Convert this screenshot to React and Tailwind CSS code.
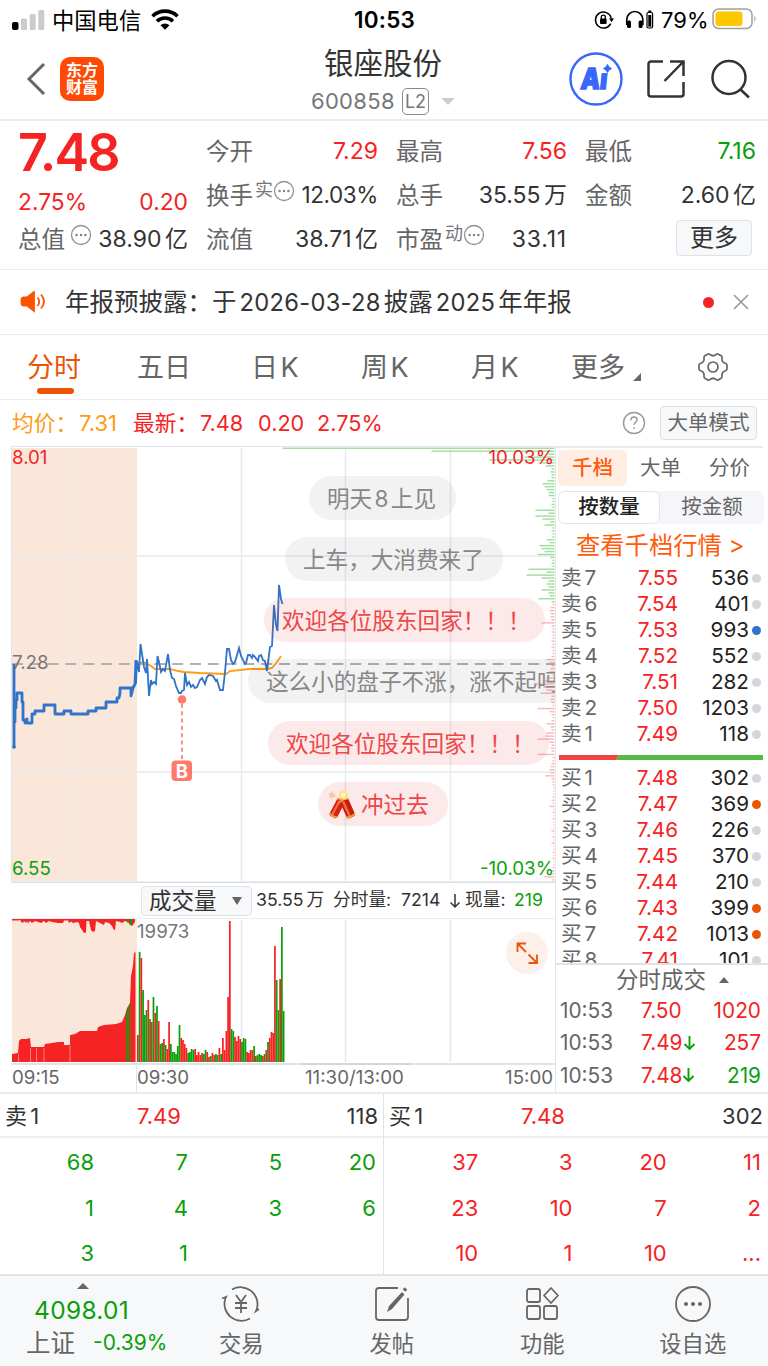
import clsx from "clsx";

const RED = "text-[#f52323]";
const GREEN = "text-[#0aa00a]";

const TABS = ["五日", "日 K", "周 K", "月 K"];

const ASKS = [
  { label: "卖 7", price: "7.55", volume: 536 },
  { label: "卖 6", price: "7.54", volume: 401 },
  { label: "卖 5", price: "7.53", volume: 993, dot: "bg-[#2f74c9]" },
  { label: "卖 4", price: "7.52", volume: 552 },
  { label: "卖 3", price: "7.51", volume: 282 },
  { label: "卖 2", price: "7.50", volume: 1203 },
  { label: "卖 1", price: "7.49", volume: 118 },
];

const BIDS = [
  { label: "买 1", price: "7.48", volume: 302 },
  { label: "买 2", price: "7.47", volume: 369, dot: "bg-[#ea5504]" },
  { label: "买 3", price: "7.46", volume: 226 },
  { label: "买 4", price: "7.45", volume: 370 },
  { label: "买 5", price: "7.44", volume: 210 },
  { label: "买 6", price: "7.43", volume: 399, dot: "bg-[#ea5504]" },
  { label: "买 7", price: "7.42", volume: 1013, dot: "bg-[#ea5504]" },
  { label: "买 8", price: "7.41", volume: 101 },
];

const TICKS = [
  { price: "7.50", volume: 1020 },
  { price: "7.49", down: true, volume: 257 },
  { price: "7.48", down: true, volume: 219, sell: true },
];

const SELL_QUEUE = ["68", "7", "5", "20", "1", "4", "3", "6", "3", "1", "", ""];
const BUY_QUEUE = ["37", "3", "20", "11", "23", "10", "7", "2", "10", "1", "10", "..."];

const AUCTION_LINE =
  "14,664 14,747 14,722 15,722 15,708 16,708 16,700 17,700 17,693 22,693 22,702 23,702 23,720 25,720 25,723 27,719 27,723 32,723 32,714 35,714 35,711 44,711 44,705 55,705 55,714 64,714 64,711 71,711 71,714 88,714 88,711 96,711 96,708 106,708 106,702 117,702 117,698 119,698 120,693 120,688 131,688 131,696 133,688 135,684 136,660";

const PRICE_LINE =
  "136,684 137,661 139,672 140.5,644 144,667 146,673 147,659 149,696 151,680 152,684 154,682 156,684 157.5,656 159,662 161,672 163,669 165,671 168,654 170,670 172,678 174,679 176,686 179,693 181,693 182,691 184,690 185,673 187,685 189,682 191,687 193,685 195,688 197,687 200,680 202,678 205,684 207,677 209,675 213,676 216,681 217,680 220,690 223,690 225,672 227,649 229,649 231,660 233,664 235,662 239,648 241,656 245,664 246,663 248,655 250,655 252,658 253,655 255,657 258,661 259,656 261,655 263,660 265,661 267,671 268,663 270,647 272,646 274,605 276,625 277.5,631 279,585 281,599 282.5,604";

const AVG_LINE =
  "138,664 140,663 143,662 146,663 151,666 155,669 170,669 178,671 184,672 200,673 226,674 230,671 250,669 267,669 272,668 277,662 281,656";

const AUCTION_VOLUME =
  "12,1062 12,1054 18,1053 19,1041 21,1039 26,1039 30,1038 31,1047 44,1047 45,1044 52,1043 58,1042 64,1042 64,1045 70,1045 70,1035 75,1034 80,1031 97,1031 98,1027 104,1025 116,1024 122,1022 125,1015 127,1008 130,1003 131,976 133,966 134,953 135.5,952 135.5,1062";

const AUCTION_UNMATCHED =
  "12,919 12,920.5 19,920.5 20,919.5 21,922 23,923 24,921 26,923 27,921 28,923.5 30,921 32,923 35,921 38,922 41,923 44,921 46,923 49,921 52,922 58,923 63,923 64,920.5 68,920.5 69,923 71,921.5 73,923 77,922 79,923 80,927 82,930 84,933 86,932.5 86.5,921 89,921 91,930 93,932 95,931 96,921 100,923 104,925 105,922 109,923 112,926 114,930 115,930 116,921 120,922 122,923 125,921 128,922 130,925 132,926 135,922 135,919";

// order depth per price level, green above the last price and red below
const DEPTH_UP = [
  272, 123, 6, 30, 65, 12, 9, 3, 4, 3, 3, 7, 12, 10, 8, 6, 6, 2, 2, 3, 2, 19, 6, 19,
  12, 4, 10, 2, 3, 2, 2, 8, 5, 15, 13, 10, 17, 4, 2, 3, 2, 26, 8, 28, 13, 6, 8, 6, 13,
  6, 5, 16, 3,
];
const DEPTH_DOWN = [
  2, 4, 5, 4, 4, 3, 13, 3, 2, 3, 2, 2, 3, 2, 3, 2, 2, 3, 8, 5, 3, 4, 5, 2, 8, 12, 21,
  11, 8, 14, 3, 4, 3, 2, 17, 5, 3, 2, 3, 8, 4, 3, 8, 9, 17, 5, 3, 4, 3, 17, 2, 2, 3, 4,
  5, 4, 9, 3, 2, 2, 1, 1, 1, 2, 3, 2, 5, 1, 2, 1, 2, 1, 1, 1, 3, 1, 2, 1, 3, 1, 1, 2,
  1, 2, 1, 1, 2, 3, 2, 10, 2,
];

const VOLUME =
  "r27 g110 r104 g72 g47 g52 r62 g43 r40 g65 r49 g56 r41 g18 g19 r23 g17 r13 r40 g18 g10 g10 g8 g16 g37 r24 r22 r18 r14 g9 g10 g13 g12 r13 r7 r10 r7 r9 g8 g12 r10 r5 g6 r9 r7 g8 g7 r14 g8 r24 r12 r31 r65 r141 g33 g31 r25 r21 r26 r23 g20 g24 g23 r10 r9 r12 r12 g16 r6 g7 g8 g7 r6 g8 r12 g20 r24 r30 r29 r116 g82 g52 r83 g135 g51".split(
    " ",
  );

const BUBBLES = [
  { text: "明天 8 上见", box: "left-[309px] top-[30px] w-[147px]" },
  { text: "上车，大消费来了", box: "left-[285px] top-[91px] w-[218px]" },
  { text: "欢迎各位股东回家！！！", box: "left-[264px] top-[152px] w-[281px]", hot: true },
  { text: "这么小的盘子不涨，涨不起吗", box: "left-[248px] top-[213px] w-[335px]" },
  { text: "欢迎各位股东回家！！！", box: "left-[268px] top-[275px] w-[281px]", hot: true },
  { text: "冲过去", box: "left-[318px] top-[336px] w-[130px]", hot: true, cracker: true },
];

function MoreDots({ className }) {
  return (
    <svg viewBox="0 0 22 22" className={clsx("size-[22px] shrink-0", className)}>
      <circle cx="11" cy="11" r="9.5" fill="none" stroke="#929292" strokeWidth="1.3" />
      <g fill="#808080">
        <circle cx="6.6" cy="11" r="1.2" />
        <circle cx="11" cy="11" r="1.2" />
        <circle cx="15.4" cy="11" r="1.2" />
      </g>
    </svg>
  );
}

function StatusBar() {
  return (
    <div className="flex h-10 items-center text-[22px] leading-10 text-black">
      <svg viewBox="0 0 34 22" className="ml-3 h-[22px] w-[34px]">
        <rect x="0" y="13" width="6.5" height="8" rx="2" />
        <g fill="#cbcbcb">
          <rect x="9" y="9.5" width="6" height="11.5" rx="1.5" />
          <rect x="17.7" y="5" width="6" height="16" rx="1.5" />
          <rect x="26.3" y="1" width="6" height="20" rx="1.5" />
        </g>
      </svg>
      <span className="ml-[6px] w-[90px] pt-px text-[22.3px]">中国电信</span>
      <svg viewBox="0 0 28 21" className="-mt-px ml-[9px] h-[21px] w-7" fill="none" stroke="#000" strokeWidth="3.6">
        <path d="M1.5 7.2a18 18 0 0 1 25 0" />
        <path d="M6 12.3a11.500 11.500 0 0 1 16 0" />
        <path d="M9.500 16.200a6.500 6.500 0 0 1 9 0L14 20.800z" fill="#000" stroke="none" />
      </svg>
      <span className="ml-[175px] w-[66px] text-[22.5px] font-semibold tracking-[0.2px]">10:53</span>
      <svg viewBox="0 0 20 20" className="ml-[174px] size-5">
        <path d="M17.500 9.500a8 8 0 1 1-2.400-5.200" fill="none" stroke="#000" strokeWidth="1.5" transform="rotate(30 9.500 10)" />
        <path d="M15 8.300h5l-2.500 4z" />
        <rect x="6" y="8.5" width="6.6" height="5.5" rx="1" />
        <path d="M7.300 9V7.200a2 2 0 0 1 4 0V9" fill="none" stroke="#000" strokeWidth="1.3" />
      </svg>
      <svg viewBox="0 0 30 20" className="ml-[11px] h-5 w-[30px]">
        <path d="M1.800 15V9.500a8 8 0 0 1 16 0V15" fill="none" stroke="#000" strokeWidth="1.7" />
        <rect x="2" y="10.5" width="4" height="7.5" rx="1.5" />
        <rect x="13.6" y="10.5" width="4" height="7.5" rx="1.5" />
        <rect x="22" y="2.5" width="5.6" height="15.5" rx="1.2" fill="none" stroke="#000" strokeWidth="1.2" />
        <rect x="23.3" y="5" width="3" height="11.7" />
        <rect x="23.3" y="0.5" width="3" height="1.5" />
      </svg>
      <span className="ml-[6px] w-[48px] text-[22px]">79%</span>
      <svg viewBox="0 0 46 22" className="-mt-[2px] ml-[3px] h-[22px] w-[46px]">
        <rect x="1" y="1" width="39" height="19.5" rx="5.5" fill="none" stroke="#a0a0a0" strokeWidth="1.5" />
        <rect x="3.5" y="3.5" width="27" height="14.5" rx="3" fill="#fdc800" />
        <path d="M42.300 7.500q2.500 3.200 0 6.600z" fill="#a0a0a0" />
      </svg>
    </div>
  );
}

function Header() {
  return (
    <header className="relative flex h-[81px] items-center border-b-2 border-[#ececee] pb-[2px]">
      <svg viewBox="0 0 20 34" className="ml-[26px] h-[34px] w-5" fill="none" stroke="#666" strokeWidth="3">
        <path d="M18 2 3 17l15 15" />
      </svg>
      <div className="ml-[14px] flex size-11 flex-col items-center justify-center rounded-[10px] bg-[#ff4a05] pt-px text-[16px] leading-[17.5px] font-bold text-white">
        <span>东方</span>
        <span>财富</span>
      </div>
      <div className="absolute top-0 left-[311px] w-[150px]">
        <h1 className="mt-[5px] pl-[13px] text-[29.5px] leading-9 text-[#333]">银座股份</h1>
        <div className="flex h-[40px] items-center text-[22px] text-[#777]">
          <span className="w-[91px] tracking-[0.3px]">600858</span>
          <span className="flex h-[27px] w-[27px] items-center justify-center rounded-[5px] border-[1.5px] border-[#888] text-[18px]">
            L2
          </span>
          <svg viewBox="0 0 14 7" className="ml-3 h-[7px] w-[14px]" fill="#ccc">
            <path d="M0 0h14L7 7z" />
          </svg>
        </div>
      </div>
      <svg viewBox="0 0 54 54" className="ml-auto size-[54px]">
        <circle cx="27" cy="27" r="25.5" fill="none" stroke="#3966fb" strokeWidth="2.4" />
        <g transform="translate(11 37) skewX(-6) scale(.84 1)">
          <text x="0" y="0" fill="#3966fb" stroke="#3966fb" strokeWidth="1.400" className="text-[29px] font-black">
            Ai
          </text>
        </g>
        <path d="M31 9.500h13v11.500H31z" fill="#fff" />
        <path d="M38.500 12.500q1 3 4 4-3 1-4 4-1-3-4-4 3-1 4-4z" fill="#3966fb" stroke="#3966fb" />
      </svg>
      <svg viewBox="0 0 40 40" className="ml-[23px] size-10" fill="none" stroke="#333" strokeWidth="2.5">
        <path d="M17 2.500H5A2.500 2.500 0 0 0 2.500 5v30A2.500 2.500 0 0 0 5 37.500h30a2.500 2.500 0 0 0 2.500-2.500V23M24 2.500h13.500V17M37 3 18.500 22" />
      </svg>
      <svg viewBox="0 0 40 40" className="mr-[18px] ml-[24px] size-10" fill="none" stroke="#333" strokeWidth="2.5">
        <circle cx="19" cy="18.5" r="16.5" />
        <path d="m30.500 30.500 8.500 8" />
      </svg>
    </header>
  );
}

function Stat({ label, sup, more, value, color = "text-[#333]" }) {
  return (
    <div className="flex h-11 items-center whitespace-nowrap">
      <span className="pt-px text-[23.5px] text-[#666]">{label}</span>
      {sup && <span className="-mt-3 ml-[2px] text-[18px] text-[#777]">{sup}</span>}
      {more && <MoreDots className={clsx("-mt-2", !sup && "ml-[5px]")} />}
      <span className={clsx("ml-auto text-[23px] [word-spacing:-3px]", color)}>{value}</span>
    </div>
  );
}

function Quote() {
  return (
    <section className="grid h-[149px] grid-cols-[170px_172px_171px_171px] gap-x-[18px] border-b border-[#eee] pt-[7px] pl-[18px]">
      <div className={RED}>
        <div className="-mt-px h-[52px] text-[52px] leading-[52px] font-semibold tracking-[-1.8px]">7.48</div>
        <div className="mt-[7px] flex h-8 items-center justify-between text-[22.8px]">
          <span>2.75%</span>
          <span>0.20</span>
        </div>
        <div className="-mt-px">
          <Stat label="总值" more value="38.90 亿" />
        </div>
      </div>
      <div className="pt-px">
        <Stat label="今开" value="7.29" color={RED} />
        <Stat label="换手" sup="实" more value={<span className="text-[22.5px] tracking-[-0.4px]">12.03%</span>} />
        <Stat label="流值" value="38.71 亿" />
      </div>
      <div className="pt-px">
        <Stat label="最高" value="7.56" color={RED} />
        <Stat label="总手" value="35.55 万" />
        <Stat label="市盈" sup="动" more value={<span className="tracking-[0.8px]">33.11</span>} />
      </div>
      <div className="pt-px">
        <Stat label="最低" value="7.16" color={GREEN} />
        <Stat label="金额" value="2.60 亿" />
        <button className="mt-[3px] ml-[91px] flex h-9 w-[76px] items-center justify-center rounded-[4px] border border-[#dfe2e8] bg-[#f7f8fa] text-[24px] text-[#333]">
          更多
        </button>
      </div>
    </section>
  );
}

function Notice() {
  return (
    <section className="flex h-[65px] items-center border-b border-[#eee] pl-5">
      <svg viewBox="0 0 26 22" className="h-[22px] w-[26px]" fill="none" stroke="#ff5200" strokeWidth="1.8">
        <path d="M3.500 6.500H7l7-5.500v19l-7-5.500H3.500a2 2 0 0 1-2-2v-4a2 2 0 0 1 2-2z" fill="#ff5200" />
        <path d="M17.500 6.500q3.500 4 0 8.500M21 3.500q6 7 0 14" />
      </svg>
      <p className="ml-[19px] text-[24.5px] whitespace-nowrap text-[#333]">
        年报预披露：于
        <span className="mx-[3px] text-[23.7px] tracking-[0.3px]">2026-03-28</span>
        披露
        <span className="mx-[3px] text-[23.7px] tracking-[0.3px]">2025</span>
        年年报
      </p>
      <span className="ml-auto size-[11px] rounded-full bg-[#f52323]" />
      <svg viewBox="0 0 16 16" className="mr-[19px] ml-[19px] size-4" stroke="#999" strokeWidth="1.6">
        <path d="m1 1 14 14M15 1 1 15" />
      </svg>
    </section>
  );
}

function PeriodTabs() {
  return (
    <nav className="flex h-[65px] items-center border-b border-[#eee] text-[27px] text-[#666] [word-spacing:-5px]">
      <div className="relative ml-[27px] h-[64px] w-[110px] leading-[66px] text-[#ea5504]">
        分时
        <span className="absolute bottom-[5px] left-[10px] h-[6px] w-[37px] rounded-full bg-[#ea5504]" />
      </div>
      {TABS.map((tab, i) => (
        <span key={tab} className={clsx("pt-[2px]", i === 0 ? "w-[114px]" : i === 3 ? "w-[100px]" : "w-[110px]")}>
          {tab}
        </span>
      ))}
      <span className="pt-[2px]">更多</span>
      <svg viewBox="0 0 8 8" className="mt-[19px] ml-[8px] size-2" fill="#666">
        <path d="M8 0v8H0z" />
      </svg>
      <svg viewBox="0 0 32 32" className="ml-[56px] size-8" fill="none" stroke="#666" strokeWidth="1.7">
        <path d="M10.500 3.200q1.200-.8 2.300.2 3.200 2.700 6.400 0 1.100-1 2.300-.2l2.600 1.500q1.200.8.900 2.100-.6 4.300 3.300 5.500 1.700.5 1.700 2v3.400q0 1.500-1.700 2-3.900 1.200-3.300 5.500.3 1.300-.9 2.100l-2.600 1.500q-1.200.8-2.300-.2-3.200-2.700-6.400 0-1.100 1-2.300.2l-2.600-1.500q-1.200-.8-.9-2.100.6-4.300-3.300-5.500-1.700-.5-1.700-2v-3.400q0-1.500 1.700-2Q7.600 11.100 7 6.800q-.3-1.300.9-2.100z" />
        <circle cx="16" cy="16" r="5" />
      </svg>
    </nav>
  );
}

function AvgRow() {
  return (
    <div className={clsx("flex h-[46px] items-center pl-3 text-[21.7px] whitespace-nowrap", RED)}>
      <span className="w-[67px] text-[#ff9b14]">均价：</span>
      <span className="w-[54px] text-[22px] text-[#ff9b14]">7.31</span>
      <span className="w-[67px]">最新：</span>
      <span className="w-[58px]">7.48</span>
      <span className="w-[59px]">0.20</span>
      <span>2.75%</span>
      <svg viewBox="0 0 24 24" className="ml-auto size-6" fill="none" stroke="#999" strokeWidth="1.4">
        <circle cx="12" cy="12" r="10.5" />
        <path d="M8.800 9.500q.2-3.500 3.300-3.500 3 0 3 2.700 0 1.500-1.600 2.600-1.400 1-1.400 2.800M12.100 16.200v1.700" />
      </svg>
      <button className="mr-[11px] ml-[14px] flex h-[34px] w-[97px] items-center justify-center rounded-[4px] border border-[#dce0e6] bg-[#f7f8fa] pt-px text-[20.5px] text-[#666]">
        大单模式
      </button>
    </div>
  );
}

function Firecracker() {
  return (
    <svg viewBox="0 0 30 30" className="mr-[4px] -ml-[9px] size-[30px] shrink-0">
      <path d="m5 1 1 3 3-1-2 2 3 2-4 0-1 3-1-3-3 1 2-2-2-2 3-1z" fill="#f5c9a0" />
      <g transform="rotate(28 10 18)">
        <rect x="6" y="8" width="8.5" height="20" rx="2" fill="#d42312" />
        <path d="M8 10h2v16H8z" fill="#ff7043" />
        <path d="M6 9.500q4.200-2 8.500 0M6 26q4.200 2 8.500 0" fill="none" stroke="#f2a43a" strokeWidth="1.8" />
      </g>
      <g transform="rotate(-24 21 18)">
        <rect x="16" y="8" width="9" height="20" rx="2" fill="#c91d10" />
        <path d="M18 10h2.500v16H18z" fill="#fa6a3c" />
        <path d="M16 9.500q4.500-2 9 0M16 26q4.500 2 9 0" fill="none" stroke="#f2a43a" strokeWidth="1.8" />
      </g>
      <circle cx="16.5" cy="5" r="4.6" fill="#ffe082" />
      <circle cx="16.5" cy="5" r="2.3" fill="#fff6cf" />
    </svg>
  );
}

function Bubble({ text, box, hot, cracker }) {
  return (
    <div
      className={clsx(
        "absolute flex h-11 items-center rounded-full pt-px pl-[18px] text-[22.6px] whitespace-pre [word-spacing:-4px]",
        box,
        hot ? "bg-[#e02a2a]/10 text-[#ee4747]" : "bg-black/5 text-[#878787]",
      )}
    >
      {cracker && <Firecracker />}
      {text}
    </div>
  );
}

function PriceChart() {
  return (
    <div className="relative h-[437px] overflow-hidden text-[18.7px] leading-5">
      <svg viewBox="0 446 555 437" className="block h-[437px] w-[555px]" fill="none">
        <path d="M12 448h125v433H12z" fill="#fbe7da" />
        <path d="M74.500 448v433M241.500 448v433M345.500 448v433M450.500 448v433M12 556h543M12 772h543" stroke="#e9eaf1" strokeWidth="1.5" />
        <path d="M11.500 881V446" stroke="#dfe2e8" />
        <path d="M11 446h545" stroke="#e4e6ea" strokeWidth="2" />
        <path d="M11 882.300h545" stroke="#dadfe5" strokeWidth="1.5" />
        <path d="M12 664H555" stroke="#b5b0b0" strokeWidth="1.8" strokeDasharray="11 6.8" />
        {DEPTH_UP.map((len, i) => (
          <path key={i} d={`M${554.5 - len} ${448.3 + i * 2.95}H554.5`} stroke="#a3dfa3" strokeWidth="1.5" />
        ))}
        {DEPTH_DOWN.map((len, i) => (
          <path key={i} d={`M${554.5 - len} ${604.5 + i * 3.06}H554.5`} stroke="#f8bcbc" strokeWidth="1.5" />
        ))}
        <polyline points={AVG_LINE} stroke="#ff9b14" strokeWidth="1.8" />
        <polyline points={AUCTION_LINE} stroke="#2f74c9" strokeWidth="2.8" strokeLinejoin="round" />
        <circle cx="14" cy="747" r="1.8" fill="#2f74c9" />
        <polyline points={PRICE_LINE} stroke="#2f74c9" strokeWidth="1.8" />
        <path d="M182 704v56" stroke="#ff7a6b" strokeWidth="1.7" strokeDasharray="4 3.3" />
        <circle cx="182" cy="699.5" r="4.3" fill="#ff7a6b" />
        <rect x="171.5" y="760.5" width="20.5" height="20.5" rx="4" fill="#ff7a6b" />
        <text x="181.8" y="777.5" textAnchor="middle" fill="#fff" className="text-[18.5px] font-bold">
          B
        </text>
      </svg>
      {BUBBLES.map((bubble) => (
        <Bubble key={bubble.box} {...bubble} />
      ))}
      <span className={clsx("absolute top-[2px] left-3", RED)}>8.01</span>
      <span className="absolute top-[207px] left-3 text-[#777]">7.28</span>
      <span className={clsx("absolute top-[413px] left-3", GREEN)}>6.55</span>
      <span className={clsx("absolute top-[2px] right-[1px]", RED)}>10.03%</span>
      <span className={clsx("absolute top-[413px] right-[1px]", GREEN)}>-10.03%</span>
    </div>
  );
}

function VolumeChart() {
  return (
    <div>
      <div className="flex h-[35px] items-center pl-[141px] text-[17.7px] whitespace-nowrap text-[#333] [word-spacing:-2px]">
        <button className="flex h-[30px] w-[111px] items-center rounded-[4px] border border-[#dfe2e8] bg-[#f7f8fa] pt-px pl-[7px] text-[22.5px]">
          成交量
          <svg viewBox="0 0 10 8" className="ml-[15px] h-2 w-[10px]" fill="#666">
            <path d="M0 0h10L5 8z" />
          </svg>
        </button>
        <span className="ml-1 w-[77px]">35.55 万</span>
        <span className="w-[68px]">分时量:</span>
        <span className="w-[45px]">7214</span>
        <svg viewBox="0 0 12 16" className="mr-1 ml-[3px] h-4 w-3" fill="none" stroke="#333" strokeWidth="1.5">
          <path d="M6 1v13M1.500 9.500 6 14l4.500-4.500" />
        </svg>
        <span className="w-[49px]">现量:</span>
        <span className={GREEN}>219</span>
      </div>
      <div className="relative h-[147px]">
        <svg viewBox="0 918 555 147" className="block h-[147px] w-[555px]" fill="none">
          <path d="M12 919h125v143H12z" fill="#fbe7da" />
          <path d="M74.500 919v143M241.500 920v142M345.500 920v142M450.500 920v142" stroke="#e4e7ee" strokeWidth="1.5" />
          <path d="M11 918.500h545" stroke="#eceef2" />
          <polygon points={AUCTION_UNMATCHED} fill="#f52323" />
          <path d="M127 919h1.500v3.500h-1.500zM130 919h2v6h-2z" fill="#0aa00a" />
          <polygon points={AUCTION_VOLUME} fill="#f52323" />
          <path d="M18.500 1062v-8M30.500 1062v-14M36.500 1062v-14M44 1062v-14M70 1062v-16" stroke="#fbb" strokeWidth=".6" />
          <path d="M126.300 1062v-50l1.500-4V1062zM129 1062v-58l1.500-1V1062z" fill="#0aa00a" />
          {VOLUME.map((bar, i) => (
            <rect
              key={i}
              x={137 + i * 1.735}
              y={1062 - Number(bar.slice(1))}
              width="1.74"
              height={bar.slice(1)}
              fill={bar[0] === "r" ? "#f52323" : "#0aa00a"}
            />
          ))}
          <path d="M11 1064h545" stroke="#dfe4e9" strokeWidth="2" />
          <path d="M301 1064h111" stroke="#cfd3d8" strokeWidth="1.5" />
          <circle cx="527" cy="953" r="21" fill="#fdf0ea" />
          <path d="M517.500 952v-8.500h8.500M518 944l8 8M537 954.500v8.500h-8.500M536.500 962.500l-8-8" stroke="#ea5504" strokeWidth="1.8" />
        </svg>
        <span className="absolute top-1 left-[137px] text-[18.7px] leading-5 text-[#777]">19973</span>
      </div>
      <div className="flex h-[27px] items-center pl-3 text-[18.7px] text-[#666]">
        <span className="flex h-full w-[125px] items-center border-r border-[#dfe2e8]">09:15</span>
        <span className="w-[168px]">09:30</span>
        <span>11:30/13:00</span>
        <span className="mr-[2px] ml-auto">15:00</span>
      </div>
    </div>
  );
}

function BookRow({ label, price, volume, dot = "bg-[#d3d6dc]" }) {
  return (
    <div className="flex h-[26px] items-center pr-[7px] pl-[5px] text-[20.7px] leading-[26px] [word-spacing:-3px]">
      <span className="w-[54px] text-[#666]">{label}</span>
      <span className={clsx("w-[63px] text-right", RED)}>{price}</span>
      <span className="ml-auto text-[#222]">{volume}</span>
      <span className={clsx("ml-[3px] size-[9px] rounded-full", dot)} />
    </div>
  );
}

function OrderBook() {
  return (
    <aside className="w-[213px] border-l border-[#e4e6ea]">
      <div className="mr-[5px] border-t-2 border-[#e8eaec]" />
      <div className="mt-[2px] ml-[2px] flex h-9 items-center text-[20.5px] text-[#666]">
        <span className="flex h-9 w-[69px] items-center justify-center rounded-[6px] bg-[#ffece3] pt-px font-medium text-[#ff5a0a]">
          千档
        </span>
        <span className="ml-[13px] w-[69px] pt-px">大单</span>
        <span className="pt-px">分价</span>
      </div>
      <div className="mt-[5px] ml-[2px] flex h-[33px] w-[206px] items-center rounded-[6px] bg-[#f5f6fa] text-[20.5px] text-[#666]">
        <span className="flex h-[33px] w-[102px] items-center justify-center rounded-[6px] border border-[#e4e6ea] bg-white font-medium text-[#222]">
          按数量
        </span>
        <span className="flex-1 text-center">按金额</span>
      </div>
      <a className="mt-[1px] block h-[40px] pl-5 text-[24.3px] leading-[40px] whitespace-nowrap text-[#ff5a0a]">查看千档行情 &gt;</a>
      {ASKS.map((row) => (
        <BookRow key={row.label} {...row} />
      ))}
      <svg viewBox="0 0 204 5" className="mt-[8px] mb-[5px] ml-[3px] h-[5px] w-[204px]">
        <path d="M0 0h60l-3 5H0z" fill="#ef4444" />
        <path d="M60 0h144v5H57z" fill="#56b942" />
      </svg>
      <div className="h-[200px] overflow-hidden border-b-2 border-[#dfe3e8]">
        {BIDS.map((row) => (
          <BookRow key={row.label} {...row} />
        ))}
      </div>
      <div className="flex h-[29px] items-center pl-[60px] text-[22.5px] text-[#666]">
        分时成交
        <svg viewBox="0 0 10 6" className="ml-[13px] h-[6px] w-[10px]" fill="#666">
          <path d="M5 0 10 6H0z" />
        </svg>
      </div>
      {TICKS.map((tick) => (
        <div key={tick.price} className="flex h-[32.5px] items-center pr-[7px] pl-[4px] text-[20.8px]">
          <span className="w-[81px] text-[#666]">10:53</span>
          <span className={RED}>{tick.price}</span>
          {tick.down && (
            <svg viewBox="0 0 13 16" className="h-4 w-[13px]" fill="none" stroke="#0aa00a" strokeWidth="1.9">
              <path d="M6.500 1v13M1.500 9l5 5 5-5" />
            </svg>
          )}
          <span className={clsx("ml-auto", tick.sell ? GREEN : RED)}>{tick.volume}</span>
        </div>
      ))}
    </aside>
  );
}

function Queue({ label, price, volume, items, color, first }) {
  return (
    <div className={clsx("w-[384px]", first && "border-r border-[#dfe2e8]")}>
      <div className="flex h-11 items-center border-b-2 border-[#eceef0] pt-[3px] pr-[5px] pl-[5px] text-[22px] text-[#333] [word-spacing:-3px]">
        <span className="w-[132px]">{label}</span>
        <span className={RED}>{price}</span>
        <span className="ml-auto">{volume}</span>
      </div>
      <div className={clsx("grid grid-cols-4 pt-[2px] pr-[7px] text-right text-[22px] leading-[45.5px]", color)}>
        {items.map((item, i) => (
          <span key={i}>{item}</span>
        ))}
      </div>
    </div>
  );
}

function NavItem({ label, children }) {
  return (
    <div className="flex w-[150.5px] flex-col items-center">
      <svg viewBox="0 0 40 40" className="mt-[8px] size-10" fill="none" stroke="#666" strokeWidth="1.8">
        {children}
      </svg>
      <span className="mt-[5px] text-[22.3px] leading-[30px]">{label}</span>
    </div>
  );
}

function BottomBar() {
  return (
    <footer className="flex h-[91px] border-t-2 border-[#e2e4e6] bg-[#f7f8fa] text-[#666]">
      <div className="w-[166px] pl-[26px] whitespace-nowrap">
        <svg viewBox="0 0 12 6" className="mt-[7px] ml-[51px] h-[6px] w-3" fill="#666">
          <path d="M6 0 12 6H0z" />
        </svg>
        <div className={clsx("mt-[6px] pl-[8px] text-[24.5px] leading-[30px] tracking-[0.3px]", GREEN)}>4098.01</div>
        <div className="mt-[3px] flex items-center text-[24.5px] leading-[30px]">
          上证
          <span className={clsx("ml-[18px] text-[21px]", GREEN)}>-0.39%</span>
        </div>
      </div>
      <NavItem label="交易">
        <path d="M11 5.500A17 17 0 0 1 35.500 26l-.5 1 3-2M29 34.500A17 17 0 0 1 4.500 14l.5-1-4 1.500" />
        <path d="m15 11 5 7 5-7M20 18v11M14 19h12M14 24h12" />
      </NavItem>
      <NavItem label="发帖">
        <path d="M26 4H7a3 3 0 0 0-3 3v26a3 3 0 0 0 3 3h26a3 3 0 0 0 3-3V14" />
        <path d="m17 22 13-14 2.500 2.500L20 25l-5 3z" fill="#666" stroke="none" />
        <path d="m32 6.500 2-2" strokeWidth="3.8" />
      </NavItem>
      <NavItem label="功能">
        <rect x="5" y="5" width="13" height="13" rx="2" />
        <rect x="5" y="22" width="13" height="13" rx="2" />
        <rect x="22" y="22" width="13" height="13" rx="2" />
        <path d="m29 4 7 7.500-7 7.500-7-7.500z" strokeLinejoin="round" />
      </NavItem>
      <NavItem label="设自选">
        <circle cx="20" cy="20" r="17" />
        <g fill="#666" stroke="none">
          <circle cx="13" cy="20" r="2" />
          <circle cx="20" cy="20" r="2" />
          <circle cx="27" cy="20" r="2" />
        </g>
      </NavItem>
    </footer>
  );
}

export default function App() {
  return (
    <div className="h-[1366px] w-[768px] overflow-hidden bg-white font-['Inter','Noto_Sans_CJK_SC',sans-serif]">
      <StatusBar />
      <Header />
      <Quote />
      <Notice />
      <PeriodTabs />
      <AvgRow />
      <main className="flex h-[646px]">
        <div className="w-[555px]">
          <PriceChart />
          <VolumeChart />
        </div>
        <OrderBook />
      </main>
      <section className="flex h-[182px] border-t-2 border-[#e8eaec]">
        <Queue label="卖 1" price="7.49" volume="118" items={SELL_QUEUE} color={GREEN} first />
        <Queue label="买 1" price="7.48" volume="302" items={BUY_QUEUE} color={RED} />
      </section>
      <BottomBar />
    </div>
  );
}
